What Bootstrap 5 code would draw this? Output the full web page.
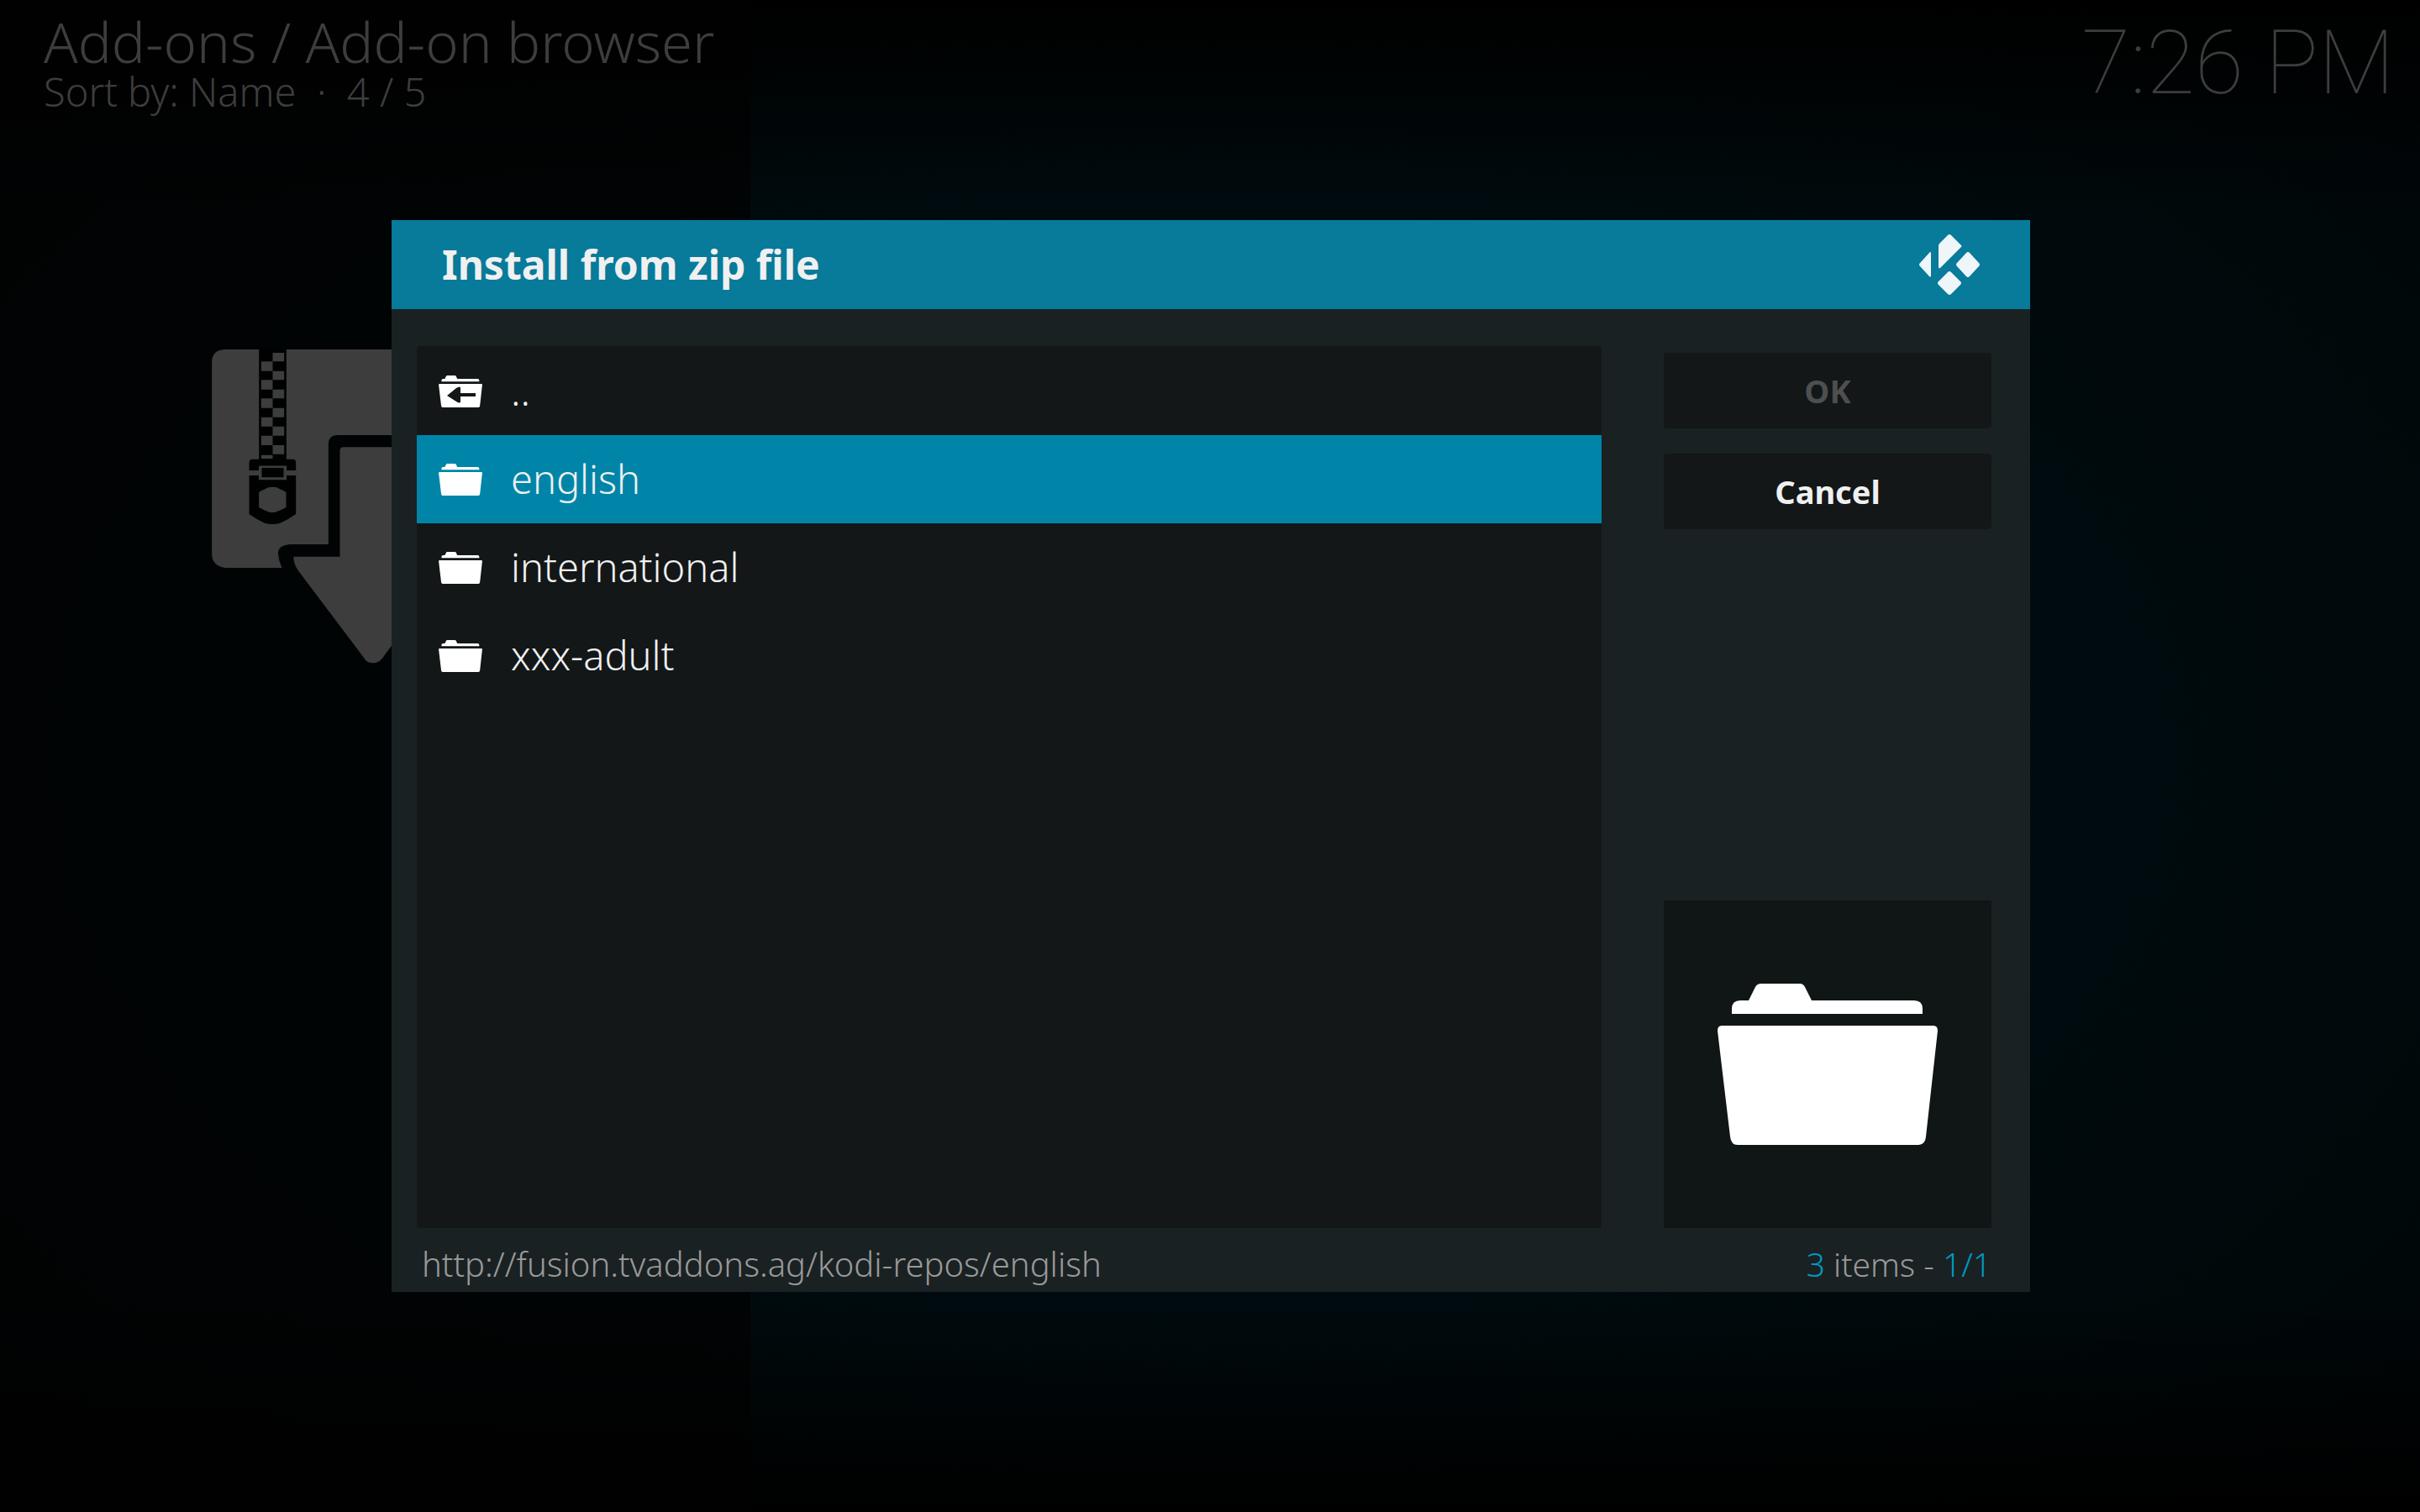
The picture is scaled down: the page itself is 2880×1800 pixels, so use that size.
<!DOCTYPE html>
<html lang="en">
<head>
<meta charset="utf-8">
<meta name="viewport" content="width=device-width, initial-scale=1">
<title>Install from zip file</title>
<link href="https://cdn.jsdelivr.net/npm/bootstrap@5.3.0/dist/css/bootstrap.min.css" rel="stylesheet">
<style>
  body { font-family: "Noto Sans", sans-serif; font-weight: 300; min-height: 100vh; color: #3d3d3d;
    background: linear-gradient(180deg, #000 0, transparent 14%, transparent 86%, #000 100%), radial-gradient(ellipse at 50% 50%, #000c14 0%, #000c14 35%, #000a0c 65%, #000507 100%); }
  .browse-pane { width: 31%; background: rgba(2, 2, 2, .7); }
  .page-title { font-size: 67px; line-height: 72px; font-weight: 300; }
  .page-sort { font-size: 47px; line-height: 48px; white-space: pre; }
  .page-head { padding: 13px 30px 0 52px; }
  .clock { font: 100 106px/124px Roboto, sans-serif; }
  .zip-art { margin: 279px 0 0 252px; width: 385px; height: 374px; }
  .dialog-layer { padding-left: 2px; }
  .dialog-box { width: 1950px; max-width: 100%; background: #1a2123; color: #f0f0f0; }
  .dialog-head { height: 106px; padding: 0 60px; background: #087a9a; }
  .dialog-head h2 { font-size: 48px; line-height: 60px; font-weight: 700; }
  .dialog-main { padding: 44px 46px 0 30px; gap: 74px; }
  .file-list { height: 1050px; padding-top: 1px; background: #131718; border-radius: 4px; }
  .file-row { height: 105px; padding: 0 26px; gap: 34px; color: #f0f0f0; font-size: 47px; line-height: 64px; text-decoration: none; }
  .file-row span { padding-bottom: 2px; }
  .file-row.active { background: #0085a9; }
  .side { width: 390px; padding-top: 8px; }
  .dlg-btn { height: 90px; border: 0; border-radius: 4px; background: #131718; color: #f0f0f0; font-size: 38px; line-height: 52px; font-weight: 700; }
  .dlg-btn + .dlg-btn { margin-top: 30px; }
  .dlg-btn:disabled { color: #4d4f50; background: #131718; opacity: 1; }
  .thumb { height: 390px; background: #101616; }
  .dialog-foot { height: 76px; padding: 11px 46px 0 36px; font-size: 39px; line-height: 64px; color: #999; }
  .path-text { font-size: 40px; }
  .hl { color: #0098c0; }
</style>
</head>
<body class="position-relative overflow-hidden">
<svg class="d-none">
  <symbol id="folder" viewBox="64 100 262 192">
    <path d="M81 136v-6q0-10 10-10h10l8-16q2-4 7-4h46q4 0 6 4l8 16h122q10 0 10 10v6z"/>
    <path d="M69 150h252q5 0 5 6l-14 126q-1 10-9 10H88q-8 0-9-10L64 156q0-6 5-6z"/>
  </symbol>
</svg>

<div class="browse-pane position-absolute top-0 start-0 h-100"></div>
<header class="page-head position-relative d-flex justify-content-between align-items-start">
  <div>
    <h1 class="page-title m-0">Add-ons / Add-on browser</h1>
    <div class="page-sort">Sort by: Name  ·  4 / 5</div>
  </div>
  <div class="clock">7:26 PM</div>
</header>
<main class="position-relative">
  <svg class="zip-art d-block" viewBox="66 78 1154 1122" fill="#3d3d3d">
    <path d="M110 78H1220V384H516Q482 384 482 418V774H350Q302 776 302 806Q304 832 316 858H114Q66 852 66 808V122Q66 82 110 78Z"/>
    <path d="M536 427H762V816H928L920 858L686 1165Q668 1198 643 1198T608 1178L374 868Q356 840 358 818H523V440Q523 427 536 427Z"/>
    <path fill="#000202" d="M234 78h98v392h24q10 0 10 12v28h-36v-14h-94v14h-37v-28q0-12 12-12h23zM244 501h78v34h-78zM199 528h37v14h94v-14h36v138q-28 20-56 32-28 8-56 0-30-14-55-32z"/>
    <path d="M283 90h41v31h-41zM242 121h41v34h-41zM283 155h41v32h-41zM242 187h41v34h-41zM283 221h41v32h-41zM242 253h41v34h-41zM283 287h41v33h-41zM242 320h41v33h-41zM283 353h41v33h-41zM242 386h41v34h-41zM283 420h41v32h-41zM242 455h41v13h-41zM234 588q24-14 38-18 12-2 22 0 12 4 37 18v54q-22 12-38 17-12 2-22 0-14-4-37-17z"/>
    <path fill="none" stroke="#3d3d3d" stroke-width="7" d="M199 519h37M330 519h36M237 497h92v43h-92z"/>
  </svg>
</main>

<div class="dialog-layer position-absolute top-0 start-0 w-100 h-100 d-flex align-items-center justify-content-center">
  <section class="dialog-box" role="dialog" aria-labelledby="dlg-title">
    <div class="dialog-head d-flex align-items-center justify-content-between">
      <h2 id="dlg-title" class="m-0">Install from zip file</h2>
      <svg width="72" height="72" viewBox="0 0 72 72" fill="#eef6f9">
        <path d="M14 22v28q-1 1-2 0L1 38q-2-2 0-4l11-12q1-2 2 0zM34 1q2-2 4 0l12 12q1 1 0 2L25 40q-2 1-2-1V14q0-2 1-3zM56 22q2-2 4 0l11 12q2 2 0 4L60 50q-2 2-4 0L45 38q-2-2 0-4zM34 45q2-2 4 0l11 11q2 2 0 4L38 71q-2 2-4 0L23 60q-2-2 0-4z"/>
      </svg>
    </div>
    <div class="dialog-main d-flex">
      <nav class="file-list flex-grow-1">
        <a href="#" class="file-row d-flex align-items-center">
          <svg width="52" height="38" viewBox="0 0 52 38"><use href="#folder" width="52" height="38" fill="#fff"/><path fill="#131718" d="M10 24l11-9q5-3 5 0v6h18v4H26v6q0 3-5 0z"/></svg>
          <span>..</span>
        </a>
        <a href="#" class="file-row active d-flex align-items-center"><svg width="52" height="38" fill="#fff"><use href="#folder"/></svg><span>english</span></a>
        <a href="#" class="file-row d-flex align-items-center"><svg width="52" height="38" fill="#fff"><use href="#folder"/></svg><span>international</span></a>
        <a href="#" class="file-row d-flex align-items-center"><svg width="52" height="38" fill="#fff"><use href="#folder"/></svg><span>xxx-adult</span></a>
      </nav>
      <div class="side d-flex flex-column flex-shrink-0">
        <button type="button" class="dlg-btn w-100" disabled>OK</button>
        <button type="button" class="dlg-btn w-100 mb-auto">Cancel</button>
        <div class="thumb d-flex align-items-center justify-content-center"><svg width="262" height="192" fill="#fff"><use href="#folder"/></svg></div>
      </div>
    </div>
    <div class="dialog-foot d-flex justify-content-between">
      <span class="path-text">http://fusion.tvaddons.ag/kodi-repos/english</span>
      <span><span class="hl">3</span> items - <span class="hl">1/1</span></span>
    </div>
  </section>
</div>
<script src="https://cdn.jsdelivr.net/npm/bootstrap@5.3.0/dist/js/bootstrap.bundle.min.js"></script>
</body>
</html>
